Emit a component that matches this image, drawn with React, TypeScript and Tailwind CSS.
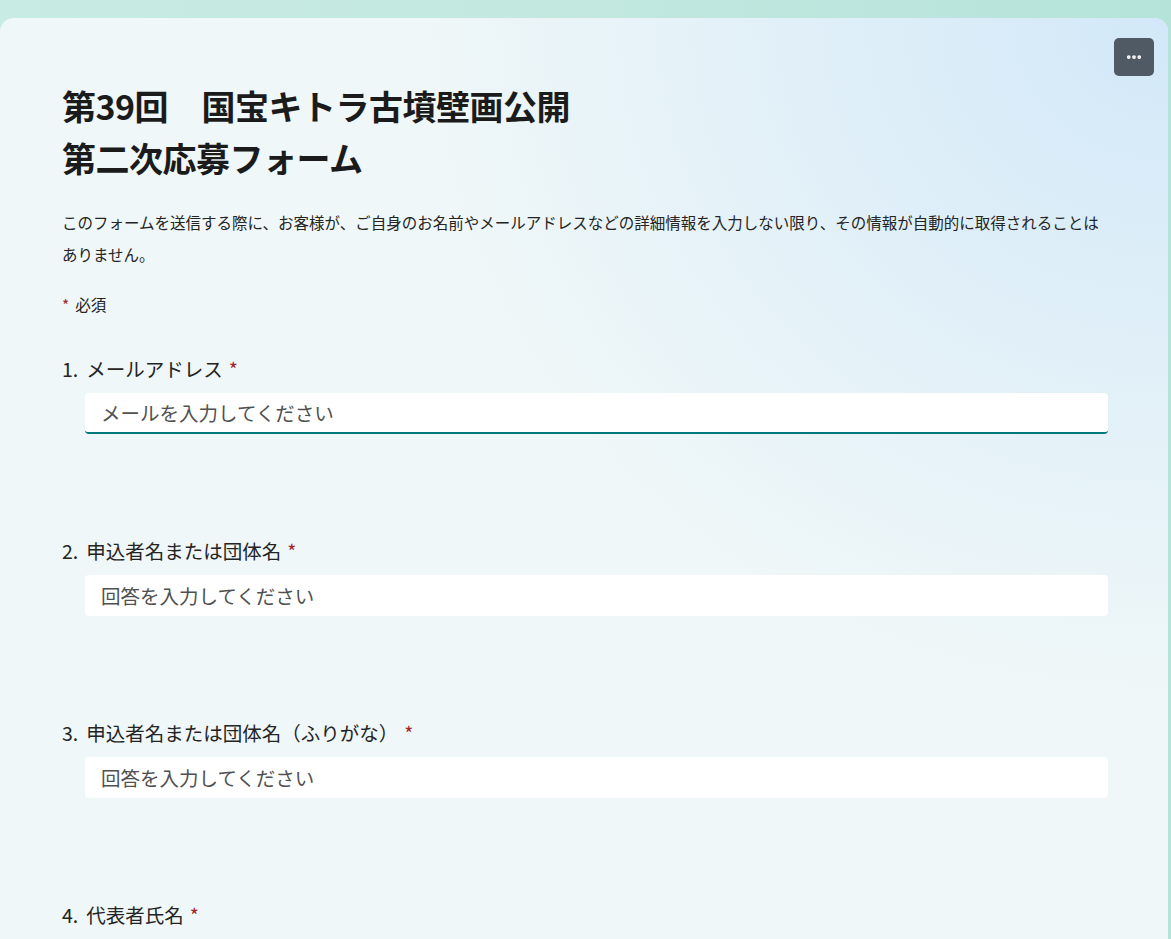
import { MoreHorizontal } from "lucide-react";

const font = { fontFamily: '"Noto Sans CJK JP", "Noto Sans", sans-serif' };

function Question({ n, label, placeholder, focused }: { n: number; label: string; placeholder: string; focused?: boolean }) {
  return (
    <div className="mb-[102px]">
      <div className="flex items-center h-[30px] text-[19.5px] text-[#242424]">
        <span className="mr-2">{n}.</span>
        <span>{label}</span>
        <span className="ml-1.5 text-[#a4262c]">*</span>
      </div>
      <div
        className={`ml-[23px] mt-[9px] h-[41px] bg-white rounded-[4px] flex items-center px-4 text-[19.5px] text-[#505050] ${
          focused ? "border-b-2 border-[#03787c]" : ""
        }`}
      >
        {placeholder}
      </div>
    </div>
  );
}

export default function App() {
  return (
    <div style={font} className="h-screen bg-gradient-to-r from-[#c8ebe3] via-[#c2e8e0] to-[#b5e3da] pt-[18px] overflow-hidden">
      <div className="relative mr-[3px] rounded-t-[14px] bg-[#eff7f8] min-h-[921px] overflow-hidden">
        <div className="absolute inset-0 bg-[radial-gradient(ellipse_at_top_right,#d2e8f8_0%,rgba(239,247,248,0)_45%)]" />
        <button className="absolute right-[14px] top-[20px] w-[40px] h-[38px] rounded-[5px] bg-[#505a65] flex items-center justify-center text-white">
          <MoreHorizontal size={18} strokeWidth={3} />
        </button>
        <div className="relative pl-[62px] pr-[60px] pt-[62px]">
          <h1 className="text-[34px] font-bold leading-[52px] text-[#1b1b1b] tracking-[-0.5px]">
            第39回　国宝キトラ古墳壁画公開
            <br />
            第二次応募フォーム
          </h1>
          <p className="mt-[22px] text-[15.5px] leading-[32px] text-[#242424]">
            このフォームを送信する際に、お客様が、ご自身のお名前やメールアドレスなどの詳細情報を入力しない限り、その情報が自動的に取得されることはありません。
          </p>
          <div className="mt-[18px] text-[15.5px] leading-[32px] text-[#242424]">
            <span className="text-[#a4262c] mr-1.5">*</span>必須
          </div>
          <div className="mt-[34px]">
            <Question n={1} label="メールアドレス" placeholder="メールを入力してください" focused />
            <Question n={2} label="申込者名または団体名" placeholder="回答を入力してください" />
            <Question n={3} label="申込者名または団体名（ふりがな）" placeholder="回答を入力してください" />
            <Question n={4} label="代表者氏名" placeholder="回答を入力してください" />
          </div>
        </div>
      </div>
    </div>
  );
}
